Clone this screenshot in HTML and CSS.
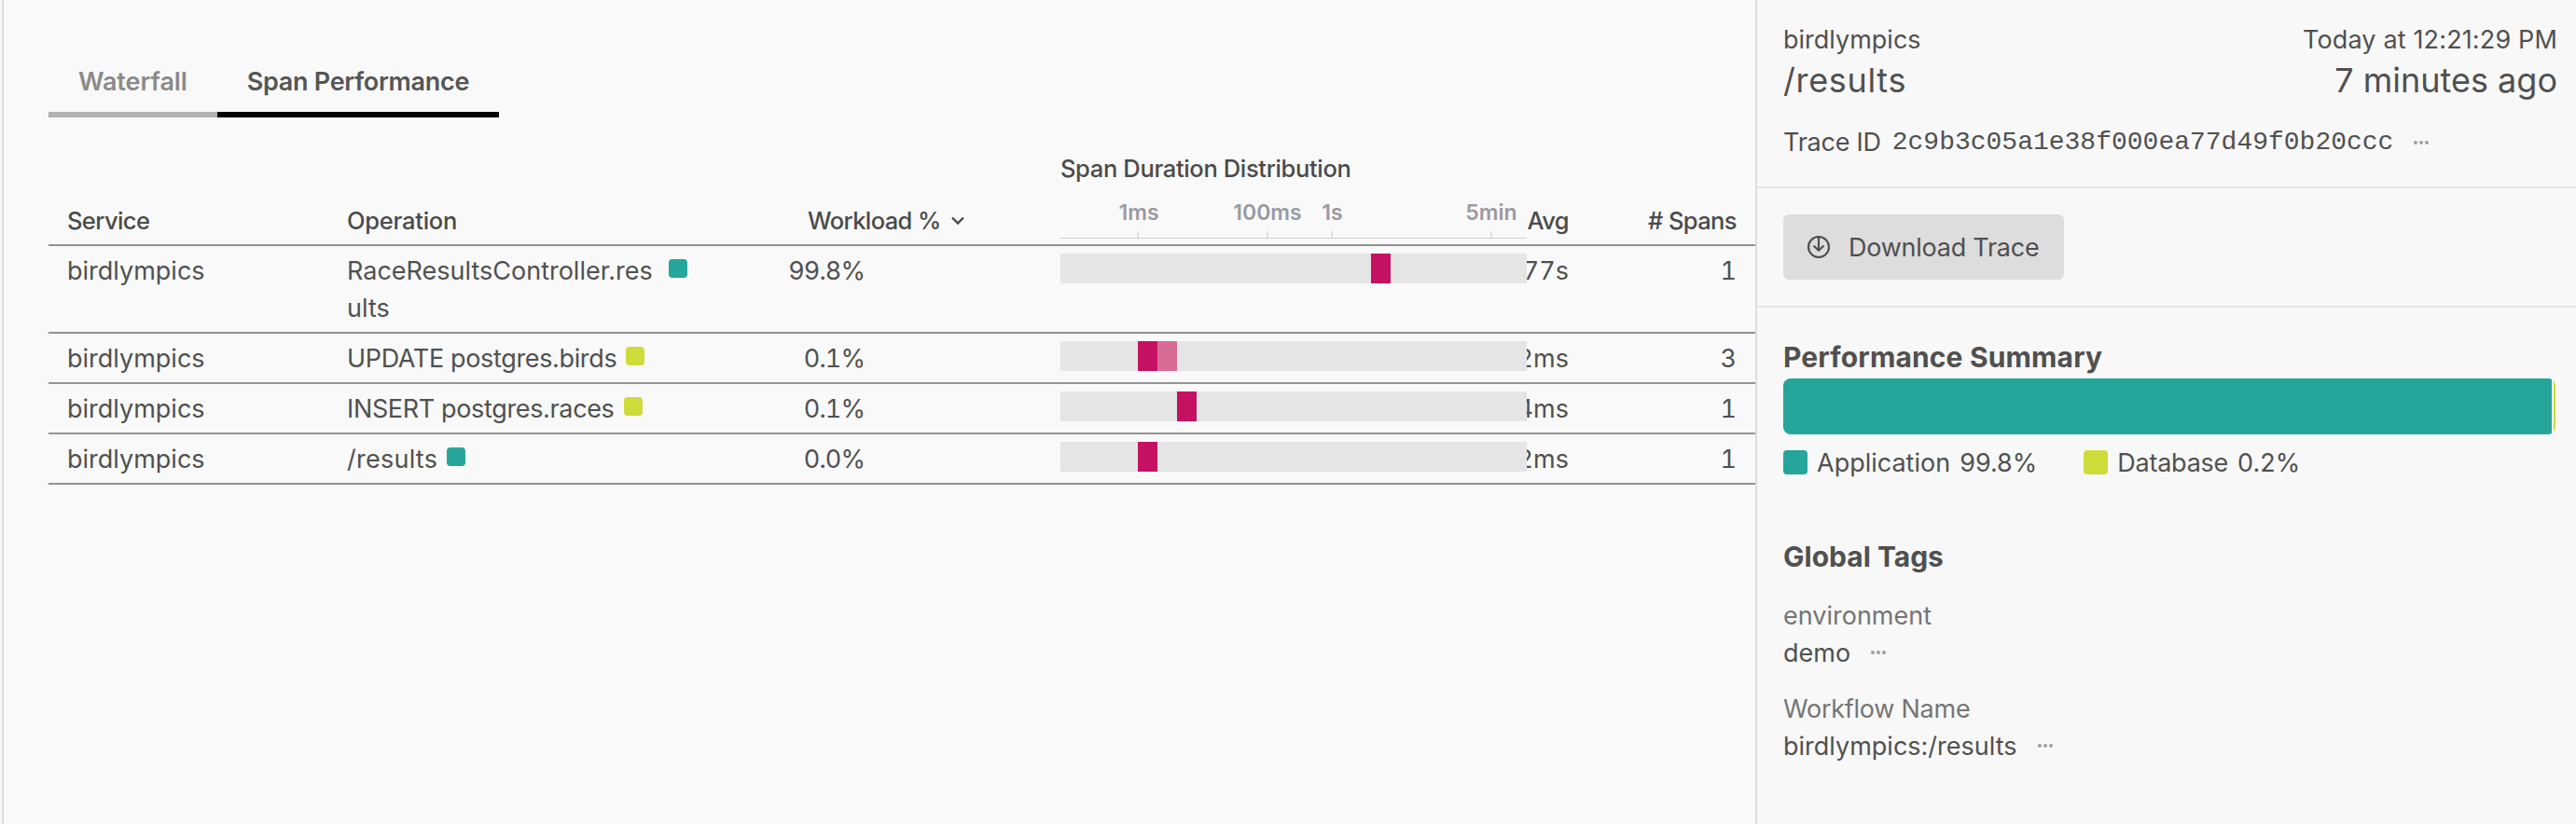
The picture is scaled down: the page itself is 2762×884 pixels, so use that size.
FILE: index.html
```html
<!DOCTYPE html>
<html lang="en">
<head>
<meta charset="utf-8">
<title>Trace – Span Performance</title>
<link rel="stylesheet" href="styles.css">
</head>
<body>
<div class="app">
  <main class="main">
    <nav class="tabs">
      <a class="tab">Waterfall</a>
      <a class="tab tab-active">Span Performance</a>
    </nav>
    <section class="table">
      <div class="row head">
        <div class="cell">Service</div>
        <div class="cell head-op">Operation</div>
        <div class="cell sort"><span>Workload %</span>
          <svg class="chevron" width="16" height="10" viewBox="0 0 16 10"><path d="M2 1.5 8 7.5 14 1.5"/></svg>
        </div>
        <div class="cell dist">
          <div class="dist-head">
            <div>Span Duration Distribution</div>
            <svg class="axis" width="500" height="56" viewBox="0 0 500 56">
              <path class="tick" d="M83 47v8M222 47v8M291 47v8M462 47v8"/>
              <path class="axis-line" d="M0 54.5h500"/>
              <text x="84" y="35">1ms</text>
              <text x="222" y="35">100ms</text>
              <text x="291.5" y="35">1s</text>
              <text x="462" y="35">5min</text>
            </svg>
          </div>
        </div>
        <div class="cell num">Avg</div>
        <div class="cell num"># Spans</div>
      </div>
      <div class="row">
        <div class="cell">birdlympics</div>
        <div class="cell op"><span class="op-name">RaceResultsController.results</span><i class="swatch app-color"></i></div>
        <div class="cell num pct">99.8%</div>
        <div class="cell dist"><div class="heat"><i style="grid-column:17"></i></div></div>
        <div class="cell num">5.77s</div>
        <div class="cell num">1</div>
      </div>
      <div class="row">
        <div class="cell">birdlympics</div>
        <div class="cell op"><span class="op-name sql">UPDATE postgres.birds</span><i class="swatch db-color"></i></div>
        <div class="cell num pct">0.1%</div>
        <div class="cell dist"><div class="heat"><i style="grid-column:5"></i><i class="low" style="grid-column:6"></i></div></div>
        <div class="cell num">1.2ms</div>
        <div class="cell num">3</div>
      </div>
      <div class="row">
        <div class="cell">birdlympics</div>
        <div class="cell op"><span class="op-name sql">INSERT postgres.races</span><i class="swatch db-color"></i></div>
        <div class="cell num pct">0.1%</div>
        <div class="cell dist"><div class="heat"><i style="grid-column:7"></i></div></div>
        <div class="cell num">3.4ms</div>
        <div class="cell num">1</div>
      </div>
      <div class="row">
        <div class="cell">birdlympics</div>
        <div class="cell op"><span class="op-name path">/results</span><i class="swatch app-color"></i></div>
        <div class="cell num pct">0.0%</div>
        <div class="cell dist"><div class="heat"><i style="grid-column:5"></i></div></div>
        <div class="cell num">1.2ms</div>
        <div class="cell num">1</div>
      </div>
    </section>
  </main>
  <aside class="side">
    <header class="summary">
      <div class="pair"><span>birdlympics</span><span class="when">Today at 12:21:29 PM</span></div>
      <div class="pair big"><span class="name">/results</span><span>7 minutes ago</span></div>
      <div class="trace"><span class="tight">Trace ID</span><code>2c9b3c05a1e38f000ea77d49f0b20ccc</code><svg class="dots" width="16" height="4" viewBox="0 0 16 4"><circle cx="2" cy="2" r="2"/><circle cx="8" cy="2" r="2"/><circle cx="14" cy="2" r="2"/></svg></div>
    </header>
    <div class="actions">
      <button class="download">
        <svg width="24" height="24" viewBox="0 0 24 24"><circle cx="12" cy="12" r="11"/><path d="M12 1v14.5M6.5 10.500 12 15.700 17.500 10.500"/></svg>
        <span class="tight">Download Trace</span>
      </button>
    </div>
    <section class="perf">
      <h2>Performance Summary</h2>
      <div class="bar"><i class="app-color"></i><i class="db-color"></i></div>
      <div class="legend">
        <div class="item"><i class="app-color"></i><span>Application</span><span>99.8%</span></div>
        <div class="item"><i class="db-color"></i><span class="tight">Database</span><span>0.2%</span></div>
      </div>
    </section>
    <section class="tags">
      <h2>Global Tags</h2>
      <dl>
        <dt>environment</dt>
        <dd><span>demo</span><svg class="dots" width="16" height="4" viewBox="0 0 16 4"><circle cx="2" cy="2" r="2"/><circle cx="8" cy="2" r="2"/><circle cx="14" cy="2" r="2"/></svg></dd>
        <dt class="tight">Workflow Name</dt>
        <dd><span>birdlympics:/results</span><svg class="dots" width="16" height="4" viewBox="0 0 16 4"><circle cx="2" cy="2" r="2"/><circle cx="8" cy="2" r="2"/><circle cx="14" cy="2" r="2"/></svg></dd>
      </dl>
    </section>
  </aside>
</div>
</body>
</html>
```
FILE: styles.css
```css
* { box-sizing: border-box; }
body {
  margin: 0;
  background: #f9f9f9;
  color: #505050;
  font: 27px/40px Inter, "Liberation Sans", sans-serif;
}
h2, dl, dd { margin: 0; }
.app { display: flex; height: 884px; overflow: hidden; padding-left: 2px; }

.main { width: 1880px; border-left: 2px solid #ddd; padding: 68px 0 0 48px; }
.tabs { display: flex; height: 58px; }
.tab { padding: 0 32px; border-bottom: 6px solid #b2b2b2; color: #8a8a8a; font-weight: 600; letter-spacing: -0.100px; white-space: nowrap; }
.tab-active { border-color: #000; color: #555; letter-spacing: -0.300px; }

.table { padding-top: 35px; }
.row {
  display: grid;
  grid-template-columns: 300px 405px 190px 690px 65px 180px;
  padding: 7px 0 5px;
  border-bottom: 2px solid #939393;
}
.cell { padding: 0 20px; white-space: nowrap; }
.head { align-items: end; height: 103px; padding: 0 0 5px; color: #4a4a4a; font-size: 25.500px; font-weight: 500; letter-spacing: -0.600px; }
.head-op { letter-spacing: -0.250px; }
.num { display: flex; justify-content: flex-end; font-variant-numeric: tabular-nums; }
.pct { letter-spacing: -0.900px; }
.sort { display: flex; align-items: center; gap: 10px; padding: 0 0 0 109px; }
.chevron { flex: none; fill: none; stroke: #4a4a4a; stroke-width: 2.400; }
.op { display: flex; }
.op-name { max-width: 335px; white-space: normal; word-break: break-all; }
.sql { letter-spacing: -0.350px; }
.path { letter-spacing: 0.250px; }
.swatch { flex: none; width: 20px; height: 20px; margin: 7px 0 0 10px; border-radius: 4px; }
.app-color { background: #26a69a; }
.db-color { background: #cddc39; }
.dist { position: relative; z-index: 1; display: flex; justify-content: flex-end; padding: 0; }
.dist-head { display: flex; flex-direction: column; width: 500px; letter-spacing: -0.350px; }
.axis { display: block; letter-spacing: 0; }
.axis text { fill: #9a9aa2; font-size: 23px; font-weight: 600; text-anchor: middle; }
.tick { stroke: #e0e0e0; stroke-width: 2; }
.axis-line { stroke: #d0d0d0; stroke-width: 1; }
.heat {
  display: grid;
  grid-template-columns: repeat(24, 1fr);
  width: 500px;
  height: 32px;
  margin-top: 1px;
  background: #e5e5e5;
}
.heat i { grid-row: 1; background: #c51162; }
.heat .low { background: #d76b95; }

.side { flex: 1; border-left: 2px solid #ddd; background: #f8f8f8; }
.summary { height: 202px; padding: 23px 20px 0 28px; border-bottom: 2px solid #e5e5e5; }
.pair { display: flex; justify-content: space-between; }
.when { letter-spacing: 0.150px; }
.big { font-size: 36px; line-height: 47px; }
.name { letter-spacing: 0.650px; }
.tight { letter-spacing: -0.250px; }
.trace { display: flex; align-items: center; margin-top: 23px; }
.trace code { margin-left: 12px; font: 28px/40px "Liberation Mono", monospace; }
.dots { margin-left: 22px; fill: #a0a0a0; }
.actions { height: 128px; padding: 28px; border-bottom: 2px solid #e5e5e5; }
.download {
  display: flex;
  align-items: center;
  gap: 20px;
  width: 301px;
  height: 70px;
  padding: 0 26px;
  border: 0;
  border-radius: 6px;
  background: #ddd;
  color: #4f4f4f;
  font: inherit;
  white-space: nowrap;
}
.download svg { flex: none; fill: none; stroke: #4f4f4f; stroke-width: 2.200; }
.download span { padding-top: 1px; }
h2 { font-size: 30px; line-height: 42px; font-weight: 700; letter-spacing: 0.150px; }
.perf { padding: 32px 22px 0 28px; }
.perf h2 { padding-bottom: 2px; }
.bar { display: flex; gap: 2px; height: 60px; border-radius: 8px; overflow: hidden; }
.bar .app-color { flex: 1; }
.bar .db-color { width: 2px; }
.legend { display: flex; gap: 50px; margin-top: 11px; }
.item { display: flex; align-items: center; }
.item i { width: 26px; height: 26px; margin: -2px 10px 0 0; border-radius: 4px; }
.item span + span { margin-left: 10px; }
.tags { padding: 59px 28px 0; }
.tags h2 { letter-spacing: 0; }
dt { margin-top: 20px; color: #757575; }
h2 + dl { padding-top: 3px; }
dd { display: flex; align-items: center; }
dd .dots { margin-top: -2px; }
```
